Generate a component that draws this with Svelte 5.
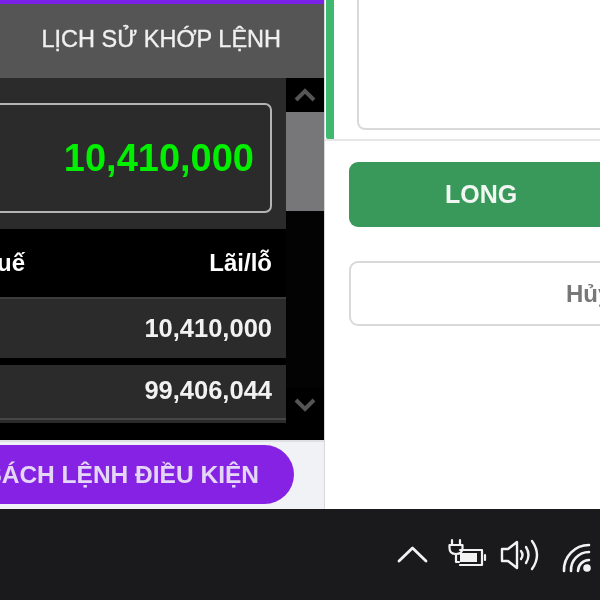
<script>
  const rows = [
    { value: '10,410,000', cls: 'row' },
    { value: '99,406,044', cls: 'row last' }
  ];
</script>

<div class="screen">
  <div class="main">
    <section class="left">
      <div class="tabbar">
        <span class="tab">LỊCH SỬ KHỚP LỆNH</span>
      </div>
      <div class="viewport">
        <div class="content">
          <div class="summary">
            <div class="total">10,410,000</div>
          </div>
          <div class="thead">
            <span class="clip">Số thuế</span>
            <span>Lãi/lỗ</span>
          </div>
          {#each rows as r}
            <div class={r.cls}><span>{r.value}</span></div>
          {/each}
        </div>
        <div class="scrollbar">
          <svg class="arrow" viewBox="0 0 38 34" width="38" height="34"><path d="M10 22 L19 13 L28 22" /></svg>
          <div class="thumb"></div>
          <div class="track"></div>
          <svg class="arrow" viewBox="0 0 38 34" width="38" height="34"><path d="M10 12 L19 21 L28 12" /></svg>
        </div>
      </div>
      <div class="foot">
        <button class="pill">DANH SÁCH LỆNH ĐIỀU KIỆN</button>
      </div>
    </section>

    <section class="right">
      <div class="top">
        <div class="strip"></div>
        <div class="note"></div>
      </div>
      <div class="actions">
        <button class="long"><span>LONG</span></button>
        <button class="cancel"><span>Hủy</span></button>
      </div>
    </section>
  </div>

  <footer class="taskbar">
    <svg class="tray" width="210" height="40" viewBox="0 0 210 40" fill="none" stroke="#f2f2f2" stroke-linecap="round" stroke-linejoin="round">
      <path d="M9 24 L22.5 11 L36 24" stroke-width="2.8" />
      <path d="M62 3 V8 M70 3 V8 M59.5 8 H72.5 V11 Q72.5 17 66 17 Q59.5 17 59.5 11 Z M66 17 V25 H69" stroke-width="2.2" />
      <path d="M70 13 H92 V28 H70" stroke-width="2.2" />
      <rect x="70" y="16" width="17" height="9" fill="#f2f2f2" stroke="none" />
      <path d="M95 18 V23" stroke-width="2.2" />
      <path d="M112 12 H118 L127 5 V31 L118 24 H112 Z" stroke-width="2.4" />
      <path d="M131 14 Q134 18 131 22 M136 10 Q141 18 136 26 M142 4 Q152 18 142 32" stroke-width="2.4" />
      <path d="M174 34 A25 25 0 0 1 199 8 M181 34 A18 18 0 0 1 199 15 M188 34 A11 11 0 0 1 199 23" stroke-width="2.6" />
      <circle cx="197" cy="31" r="3.8" fill="#f2f2f2" stroke="none" />
    </svg>
  </footer>
</div>

<style>
  :global(body) {
    margin: 0;
    background: #fff;
  }
  .screen {
    width: 600px;
    height: 600px;
    display: flex;
    flex-direction: column;
    overflow: hidden;
    font-family: "Liberation Sans", Arial, sans-serif;
    filter: blur(0.45px);
  }
  .main {
    flex: 0 0 509px;
    display: flex;
    overflow: hidden;
    background: #fff;
  }
  .left {
    flex: 0 0 325px;
    min-width: 0;
    display: flex;
    flex-direction: column;
    overflow: hidden;
    border-right: 1px solid #d8d8d8;
    box-sizing: border-box;
  }
  .tabbar {
    flex: 0 0 78px;
    box-sizing: border-box;
    border-top: 4px solid #7b22e8;
    background: #555556;
    display: flex;
    align-items: center;
    justify-content: flex-end;
    padding: 0 43px 3px 0;
  }
  .tab {
    color: #f0f0f0;
    font-size: 23.5px;
    font-weight: 400;
    -webkit-text-stroke: 0.35px #f0f0f0;
    white-space: nowrap;
  }
  .viewport {
    flex: 0 0 362px;
    background: #000;
    display: flex;
  }
  .content {
    flex: 0 0 286px;
    min-width: 0;
    display: flex;
    flex-direction: column;
    align-items: stretch;
  }
  .summary {
    height: 151px;
    background: #2b2b2b;
    padding: 25px 14px 16px 0;
    box-sizing: border-box;
  }
  .total {
    height: 110px;
    box-sizing: border-box;
    margin-left: -20px;
    border: 2px solid #b4b4b4;
    border-radius: 7px;
    display: flex;
    align-items: center;
    justify-content: flex-end;
    padding-right: 16px;
    color: #00f000;
    font-size: 38px;
    font-weight: 700;
  }
  .thead {
    height: 68px;
    display: flex;
    align-items: center;
    justify-content: space-between;
    padding-right: 14px;
    color: #fff;
    font-size: 24px;
    font-weight: 700;
  }
  .clip {
    margin-left: -63px;
  }
  .row {
    height: 61px;
    background: #2b2b2b;
    border-top: 2px solid #3c3c3c;
    box-sizing: border-box;
    display: flex;
    align-items: center;
    justify-content: flex-end;
    padding-right: 14px;
    color: #f2f2f2;
    font-size: 25.5px;
    font-weight: 700;
  }
  .row.last {
    height: 58px;
    margin-top: 7px;
    padding-bottom: 7px;
    border-top: 0;
    box-shadow: inset 0 -3px 0 #2b2b2b, inset 0 -5px 0 #464646;
  }
  .scrollbar {
    flex: 0 0 38px;
    display: flex;
    flex-direction: column;
    background: #000;
  }
  .arrow {
    flex: none;
    display: block;
  }
  .arrow path {
    fill: none;
    stroke: #555;
    stroke-width: 4;
  }
  .thumb {
    height: 99px;
    background: #777779;
  }
  .track {
    flex: 1;
    min-height: 0;
    background: #030303;
  }
  .scrollbar .arrow:last-child {
    margin-bottom: 18px;
  }
  .foot {
    flex: 1;
    min-height: 0;
    background: #f0f2f5;
    border-top: 2px solid #dfe0e3;
    box-sizing: border-box;
    display: flex;
    justify-content: flex-end;
    padding: 3px 30px 0 0;
  }
  .pill {
    flex: none;
    height: 59px;
    padding: 0 35px 0 24px;
    border: 0;
    border-radius: 30px;
    background: #8522e4;
    color: #e4d6f6;
    font: 700 24.5px "Liberation Sans", Arial, sans-serif;
    white-space: nowrap;
  }
  .right {
    flex: 1;
    min-width: 0;
    display: flex;
    flex-direction: column;
  }
  .top {
    height: 141px;
    box-sizing: border-box;
    border-bottom: 2px solid #e6e6e6;
    display: flex;
    padding-left: 1px;
  }
  .strip {
    flex: 0 0 8px;
    background: #3eb96f;
    border-radius: 0 0 0 2px;
  }
  .note {
    flex: 0 0 400px;
    height: 130px;
    margin-left: 23px;
    box-sizing: border-box;
    border: 2px solid #d9d9d9;
    border-top: 0;
    border-radius: 0 0 0 8px;
  }
  .actions {
    display: flex;
    flex-direction: column;
    gap: 34px;
    padding: 21px 0 0 24px;
  }
  .long, .cancel {
    width: 400px;
    height: 65px;
    box-sizing: border-box;
    border-radius: 9px;
    font-family: "Liberation Sans", Arial, sans-serif;
    font-weight: 700;
    text-align: left;
  }
  .long {
    background: #38995a;
    border: 0;
    color: #f2f6f2;
    font-size: 25px;
    padding: 0 0 0 96px;
  }
  .cancel {
    background: #fff;
    border: 2px solid #d9d9d9;
    color: #777;
    font-size: 24px;
    padding: 0 0 0 215px;
  }
  .taskbar {
    flex: 1;
    min-height: 0;
    background: #1a1a1c;
    display: flex;
    justify-content: flex-end;
    padding: 28px 0 0 0;
  }
  .tray {
    flex: none;
  }
</style>
